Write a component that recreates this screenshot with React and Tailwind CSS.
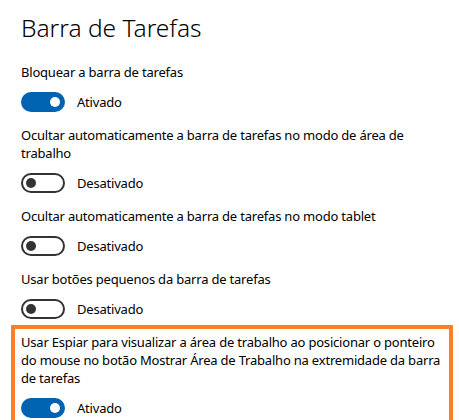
import React from "react";

const settings = [
  { lines: ["Bloquear a barra de tarefas"], on: true },
  {
    lines: ["Ocultar automaticamente a barra de tarefas no modo de área de", "trabalho"],
    on: false,
  },
  { lines: ["Ocultar automaticamente a barra de tarefas no modo tablet"], on: false },
  { lines: ["Usar botões pequenos da barra de tarefas"], on: false },
  {
    lines: [
      "Usar Espiar para visualizar a área de trabalho ao posicionar o ponteiro",
      "do mouse no botão Mostrar Área de Trabalho na extremidade da barra",
      "de tarefas",
    ],
    on: true,
  },
];

const Toggle = ({ on }) =>
  on ? (
    <div className="w-[44px] h-[20px] rounded-full bg-[#0063b1] flex items-center justify-end pr-[5px]">
      <div className="w-[10px] h-[10px] rounded-full bg-white" />
    </div>
  ) : (
    <div className="w-[44px] h-[20px] rounded-full border-2 border-[#333] flex items-center pl-[3px]">
      <div className="w-[10px] h-[10px] rounded-full bg-[#333]" />
    </div>
  );

export default function App() {
  return (
    <div
      className="relative w-[459px] h-[420px] overflow-hidden bg-white text-black pl-[21px] pt-[12px]"
      style={{ fontFamily: '"Noto Sans", "Open Sans", sans-serif' }}
    >
      <h1 className="text-[24.5px] leading-[32px] font-light mb-[19px]">Barra de Tarefas</h1>

      <div className="flex flex-col gap-[14px] text-[13px] tracking-[-0.2px]">
        {settings.map((s) => (
          <div key={s.lines[0]} className="flex flex-col">
            {s.lines.map((l) => (
              <div key={l} className="leading-[18px] whitespace-nowrap">
                {l}
              </div>
            ))}
            <div className="flex items-center gap-[12px] mt-[11px]">
              <Toggle on={s.on} />
              <span className="leading-[20px]">{s.on ? "Ativado" : "Desativado"}</span>
            </div>
          </div>
        ))}
      </div>

      {/* destaque laranja */}
      <div className="absolute left-[11px] top-[325px] w-[442px] h-[120px] border-4 border-[#ff7f27]" />
    </div>
  );
}
